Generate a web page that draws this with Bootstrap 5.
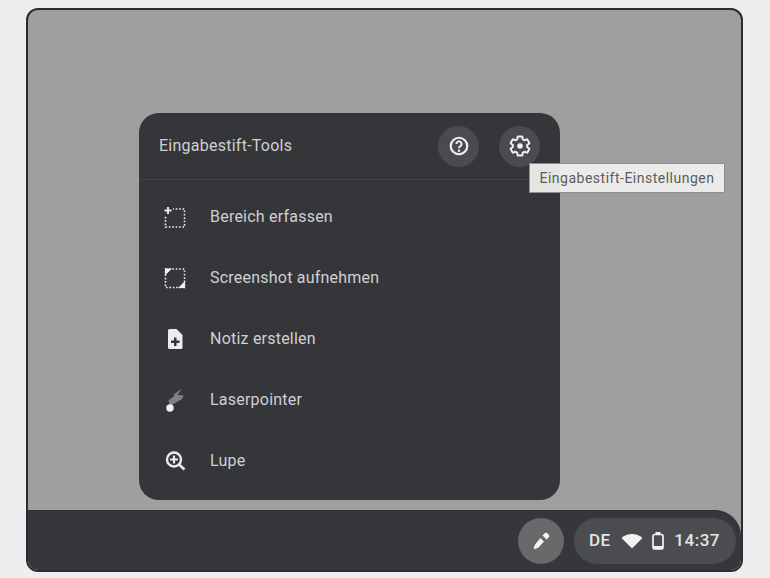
<!DOCTYPE html>
<html lang="de">
<head>
    <meta charset="UTF-8">
    <meta name="viewport" content="width=device-width, initial-scale=1.0">
    <title>Eingabestift-Tools</title>
    <link rel="stylesheet" href="https://cdn.jsdelivr.net/npm/bootstrap@5.3.0/dist/css/bootstrap.min.css">
    <style>
        html, body { height: 100%; overflow: hidden; }
        body {
            background-color: #eceef0;
            font-family: Roboto, "Liberation Sans", sans-serif;
            padding: 8px 26px 6px 26px;
        }
        .screen-frame {
            width: 717px;
            height: 564px;
            border: 2px solid #2b2c2f;
            border-radius: 12px;
            overflow: hidden;
            background-color: #9f9f9f;
        }
        .desktop-area {
            height: 500px;
            padding: 103px 0 0 111px;
        }
        .pen-panel {
            width: 421px;
            height: 387px;
            background-color: #35363a;
            border-radius: 20px;
            color: #cfd0d2;
        }
        .panel-head {
            height: 67px;
            padding: 0 20px;
            border-bottom: 1px solid #414246;
            font-size: 16px;
            letter-spacing: .25px;
        }
        .round-btn {
            width: 41px;
            height: 41px;
            border-radius: 50%;
            background-color: #4a4b4f;
        }
        .head-buttons { gap: 20px; }
        .tool-list { padding-top: 6px; }
        .tool-row {
            height: 61px;
            padding-left: 23px;
            font-size: 16px;
            letter-spacing: .22px;
        }
        .tool-icon { width: 48px; flex: none; }
        .pen-tooltip {
            top: 50px;
            left: 390px;
            width: 196px;
            height: 30px;
            background-color: rgba(240, 240, 238, .94);
            border: 1px solid #8f8f8f;
            color: #5b5b5b;
            font-size: 14px;
            letter-spacing: .5px;
        }
        .shelf {
            height: 60px;
            background-color: #9f9f9f;
        }
        .shelf-inner {
            height: 100%;
            background-color: #36373b;
            border-top: 1px solid #2f3033;
            border-top-right-radius: 26px;
            padding: 0 5px 0 0;
        }
        .stylus-btn {
            width: 46px;
            height: 46px;
            border-radius: 50%;
            background-color: #69696b;
            margin-right: 10px;
        }
        .tray-pill {
            height: 46px;
            width: 162px;
            border-radius: 23px;
            background-color: #4b4c50;
            color: #e4e5e6;
            font-size: 17px;
            font-weight: 500;
            letter-spacing: .5px;
            padding: 0 16px 0 15px;
        }
    </style>
</head>
<body>
    <div class="screen-frame d-flex flex-column">
        <div class="desktop-area">
            <div class="pen-panel position-relative">
                <div class="panel-head d-flex align-items-center justify-content-between">
                    <span>Eingabestift-Tools</span>
                    <div class="head-buttons d-flex">
                        <div class="round-btn d-flex align-items-center justify-content-center">
                            <svg width="22" height="22" viewBox="0 0 24 24" fill="none" stroke="#eeeeee">
                                <circle cx="12" cy="12" r="9" stroke-width="2.4"/>
                                <path d="M9.2 9.8a2.8 2.8 0 1 1 4.4 2.2c-1 .7-1.6 1.2-1.6 2.4" stroke-width="2.2"/>
                                <circle cx="12" cy="17.2" r="1.3" fill="#eeeeee" stroke="none"/>
                            </svg>
                        </div>
                        <div class="round-btn d-flex align-items-center justify-content-center">
                            <svg width="24" height="24" viewBox="0 0 24 24" fill="none" stroke="#eeeeee">
                                <path d="M19.14 12.94c.04-.3.06-.61.06-.94 0-.32-.02-.64-.07-.94l2.03-1.58c.18-.14.23-.41.12-.61l-1.92-3.32c-.12-.22-.37-.29-.59-.22l-2.39.96c-.5-.38-1.03-.7-1.62-.94l-.36-2.54c-.04-.24-.24-.41-.48-.41h-3.84c-.24 0-.43.17-.47.41l-.36 2.54c-.59.24-1.13.57-1.62.94l-2.39-.96c-.22-.08-.47 0-.59.22L2.74 8.87c-.12.21-.08.47.12.61l2.03 1.58c-.05.3-.09.63-.09.94s.02.64.07.94l-2.03 1.58c-.18.14-.23.41-.12.61l1.92 3.32c.12.22.37.29.59.22l2.39-.96c.5.38 1.03.7 1.62.94l.36 2.54c.05.24.24.41.48.41h3.84c.24 0 .44-.17.47-.41l.36-2.54c.59-.24 1.13-.56 1.62-.94l2.39.96c.22.08.47 0 .59-.22l1.92-3.32c.12-.22.07-.47-.12-.61l-2.01-1.58z" stroke-width="2" stroke-linejoin="round"/>
                                <circle cx="12" cy="12" r="2.800" fill="#eeeeee" stroke="none"/>
                            </svg>
                        </div>
                    </div>
                </div>

                <div class="tool-list">
                    <div class="tool-row d-flex align-items-center">
                        <div class="tool-icon">
                            <svg width="24" height="24" viewBox="0 0 24 24" fill="none" stroke="#e8e8e8">
                                <rect x="3.500" y="4" width="19" height="18" stroke-width="1.600" stroke-dasharray="1.700 1.700"/>
                                <rect x="1" y="0" width="10" height="10" fill="#35363a" stroke="none"/>
                                <path d="M6 2v7M2.500 5.500h7" stroke-width="2"/>
                            </svg>
                        </div>
                        <span>Bereich erfassen</span>
                    </div>
                    <div class="tool-row d-flex align-items-center">
                        <div class="tool-icon">
                            <svg width="24" height="24" viewBox="0 0 24 24" fill="none" stroke="#e8e8e8">
                                <rect x="3.500" y="3" width="19" height="18.500" stroke-width="1.600" stroke-dasharray="1.700 1.700"/>
                                <path d="M3 2.500h7L3 9.500zM23 22h-7l7-7z" fill="#f0f0f0" stroke="none"/>
                            </svg>
                        </div>
                        <span>Screenshot aufnehmen</span>
                    </div>
                    <div class="tool-row d-flex align-items-center">
                        <div class="tool-icon">
                            <svg width="24" height="22" viewBox="0 0 24 22">
                                <path fill="#ececec" fill-rule="evenodd" d="M7.500 1h7l6 6v12.500a1.500 1.500 0 0 1-1.500 1.500h-11.500a1.500 1.500 0 0 1-1.500-1.500v-17a1.500 1.500 0 0 1 1.500-1.500zM12 9.500v3h-3v2.500h3v3h2.500v-3h3v-2.500h-3v-3z"/>
                            </svg>
                        </div>
                        <span>Notiz erstellen</span>
                    </div>
                    <div class="tool-row d-flex align-items-center">
                        <div class="tool-icon">
                            <svg width="24" height="24" viewBox="0 0 24 24">
                                <path fill="#808183" d="M20 .5l-4.500 6.500 6 .5-1.500 3.500-12 7-1.500-5.500 6.500-5-2-.5z"/>
                                <circle cx="8" cy="20" r="3.700" fill="#f2f2f2"/>
                            </svg>
                        </div>
                        <span>Laserpointer</span>
                    </div>
                    <div class="tool-row d-flex align-items-center">
                        <div class="tool-icon">
                            <svg width="24" height="22" viewBox="0 0 24 22" fill="none" stroke="#ececec">
                                <g transform="translate(3 0)">
                                    <circle cx="9" cy="9.500" r="7" stroke-width="2.400"/>
                                    <path d="M14 14.500l5.500 5" stroke-width="2.600"/>
                                    <path d="M9 5.500v8M5 9.500h8" stroke-width="2.200"/>
                                </g>
                            </svg>
                        </div>
                        <span>Lupe</span>
                    </div>
                </div>

                <div class="pen-tooltip position-absolute d-flex align-items-center justify-content-center">Eingabestift-Einstellungen</div>
            </div>
        </div>

        <div class="shelf flex-grow-1">
            <div class="shelf-inner d-flex align-items-center justify-content-end">
                <div class="stylus-btn d-flex align-items-center justify-content-center">
                    <svg width="20" height="20" viewBox="0 0 20 20">
                        <path fill="#f4f4f4" d="M11.500 4.500l2.500-2.500q1-.8 2 0l2 2q.8 1 0 2l-2.500 2.500zM9.500 7l3.500 3.500-5.500 6q-1 .8-2 .8l-1.500 1-1.500-1.500 1-1.500q0-1 .8-2z"/>
                    </svg>
                </div>
                <div class="tray-pill d-flex align-items-center justify-content-between">
                    <span>DE</span>
                    <svg width="22" height="16" viewBox="0 0 22 16"><path fill="#f2f2f2" d="M11 15.500L.5 5c5.800-5.200 15.200-5.200 21 0z"/></svg>
                    <svg width="12" height="18" viewBox="0 0 12 18" fill="none" stroke="#f2f2f2">
                        <rect x="1" y="2.500" width="10" height="14.500" rx="1.500" stroke-width="1.700"/>
                        <path d="M3.500 0h5v3h-5zM1 14h10v3H1z" fill="#f2f2f2" stroke="none"/>
                    </svg>
                    <span>14:37</span>
                </div>
            </div>
        </div>
    </div>
    <script src="https://cdn.jsdelivr.net/npm/bootstrap@5.3.0/dist/js/bootstrap.bundle.min.js"></script>
</body>
</html>
